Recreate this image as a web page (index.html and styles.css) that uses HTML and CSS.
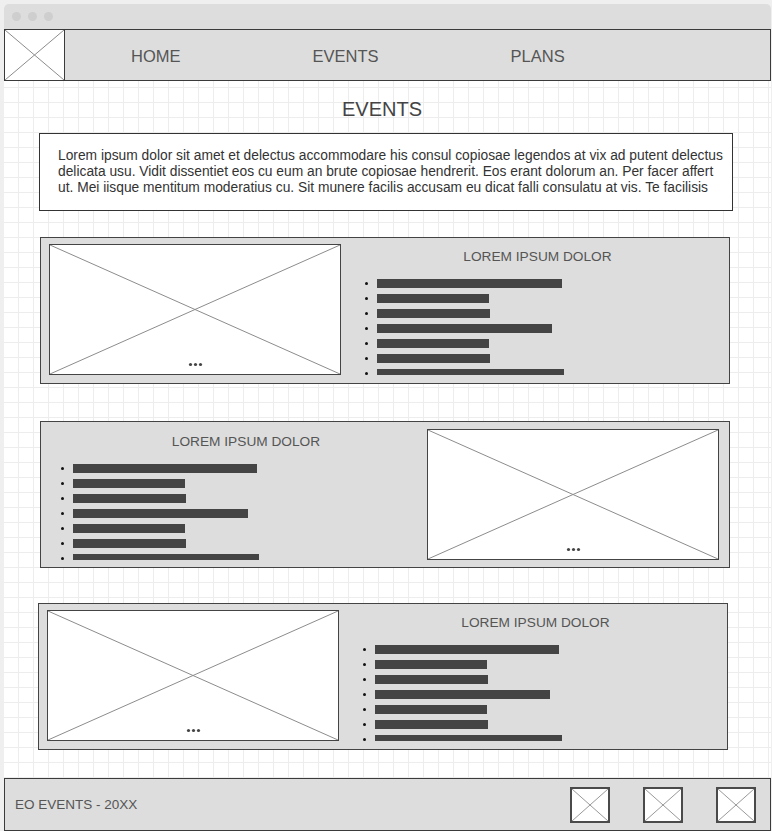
FILE: index.html
```
<!DOCTYPE html>
<html lang="en">
<head>
  <meta charset="UTF-8" />
  <meta name="viewport" content="width=device-width, initial-scale=1" />
  <title>EO Events - Events</title>
  <link rel="stylesheet" href="styles.css">
</head>
<body>
  <div class="window">
    <div class="titlebar">
      <span class="dot"></span>
      <span class="dot"></span>
      <span class="dot"></span>
    </div>

    <nav class="nav">
      <div class="logo">
        <svg viewBox="0 0 59 50" preserveAspectRatio="none">
          <line x1="0" y1="0" x2="59" y2="50" />
          <line x1="0" y1="50" x2="59" y2="0" />
        </svg>
      </div>
      <div class="nav-links">
        <a href="#">HOME</a>
        <a href="#">EVENTS</a>
        <a href="#">PLANS</a>
      </div>
    </nav>

    <main class="main">
      <h1>EVENTS</h1>
      <div class="intro">
        Lorem ipsum dolor sit amet et delectus accommodare his consul copiosae legendos at vix ad putent delectus delicata usu. Vidit dissentiet eos cu eum an brute copiosae hendrerit. Eos erant dolorum an. Per facer affert ut. Mei iisque mentitum moderatius cu. Sit munere facilis accusam eu dicat falli consulatu at vis. Te facilisis
      </div>

      <!-- event 1: picture left -->
      <section class="card card-1">
        <div class="ph">
          <svg viewBox="0 0 290 129" preserveAspectRatio="none">
            <line x1="0" y1="0" x2="290" y2="129" />
            <line x1="0" y1="129" x2="290" y2="0" />
            <circle cx="140.5" cy="119.5" r="1.6" />
            <circle cx="145.5" cy="119.5" r="1.6" />
            <circle cx="150.5" cy="119.5" r="1.6" />
          </svg>
        </div>
        <div class="info">
          <h2>LOREM IPSUM DOLOR</h2>
          <ul>
            <li><span class="bar" style="width:185px"></span></li>
            <li><span class="bar" style="width:112px"></span></li>
            <li><span class="bar" style="width:113px"></span></li>
            <li><span class="bar" style="width:175px"></span></li>
            <li><span class="bar" style="width:112px"></span></li>
            <li><span class="bar" style="width:113px"></span></li>
            <li><span class="bar" style="width:187px"></span></li>
          </ul>
        </div>
      </section>

      <!-- event 2: picture right -->
      <section class="card card-2 card-reverse">
        <div class="info">
          <h2>LOREM IPSUM DOLOR</h2>
          <ul>
            <li><span class="bar" style="width:184px"></span></li>
            <li><span class="bar" style="width:112px"></span></li>
            <li><span class="bar" style="width:113px"></span></li>
            <li><span class="bar" style="width:175px"></span></li>
            <li><span class="bar" style="width:112px"></span></li>
            <li><span class="bar" style="width:113px"></span></li>
            <li><span class="bar" style="width:186px"></span></li>
          </ul>
        </div>
        <div class="ph">
          <svg viewBox="0 0 290 129" preserveAspectRatio="none">
            <line x1="0" y1="0" x2="290" y2="129" />
            <line x1="0" y1="129" x2="290" y2="0" />
            <circle cx="140.5" cy="119.5" r="1.6" />
            <circle cx="145.5" cy="119.5" r="1.6" />
            <circle cx="150.5" cy="119.5" r="1.6" />
          </svg>
        </div>
      </section>

      <!-- event 3: picture left -->
      <section class="card card-3">
        <div class="ph">
          <svg viewBox="0 0 290 129" preserveAspectRatio="none">
            <line x1="0" y1="0" x2="290" y2="129" />
            <line x1="0" y1="129" x2="290" y2="0" />
            <circle cx="140.5" cy="119.5" r="1.6" />
            <circle cx="145.5" cy="119.5" r="1.6" />
            <circle cx="150.5" cy="119.5" r="1.6" />
          </svg>
        </div>
        <div class="info">
          <h2>LOREM IPSUM DOLOR</h2>
          <ul>
            <li><span class="bar" style="width:184px"></span></li>
            <li><span class="bar" style="width:112px"></span></li>
            <li><span class="bar" style="width:113px"></span></li>
            <li><span class="bar" style="width:175px"></span></li>
            <li><span class="bar" style="width:112px"></span></li>
            <li><span class="bar" style="width:113px"></span></li>
            <li><span class="bar" style="width:187px"></span></li>
          </ul>
        </div>
      </section>
    </main>

    <footer class="footer">
      <span class="brand">EO EVENTS - 20XX</span>
      <div class="social">
        <span class="icon"><svg viewBox="0 0 36 32" preserveAspectRatio="none"><line x1="0" y1="0" x2="36" y2="32" /><line x1="0" y1="32" x2="36" y2="0" /></svg></span>
        <span class="icon"><svg viewBox="0 0 36 32" preserveAspectRatio="none"><line x1="0" y1="0" x2="36" y2="32" /><line x1="0" y1="32" x2="36" y2="0" /></svg></span>
        <span class="icon"><svg viewBox="0 0 36 32" preserveAspectRatio="none"><line x1="0" y1="0" x2="36" y2="32" /><line x1="0" y1="32" x2="36" y2="0" /></svg></span>
      </div>
    </footer>
  </div>
</body>
</html>
```

FILE: styles.css
```
body {
  margin: 0;
  background: #efefef;
  font-family: "Liberation Sans", Arial, sans-serif;
  overflow: hidden;
}
.window {
  margin: 4px 0 0 4px;
  width: 767px;
  height: 827px;
  display: flex;
  flex-direction: column;
}
.titlebar {
  height: 25px;
  flex: none;
  box-sizing: border-box;
  padding-left: 8px;
  background: #dddddd;
  border-radius: 5px 5px 0 0;
  display: flex;
  align-items: center;
  gap: 7px;
}
.dot {
  width: 9px;
  height: 9px;
  border-radius: 50%;
  background: #cecece;
}
svg line {
  stroke: #8c8c8c;
  stroke-width: 1;
  vector-effect: non-scaling-stroke;
}
.nav {
  height: 52px;
  flex: none;
  box-sizing: border-box;
  border: 1px solid #3a3a3a;
  background: #dddddd;
  display: flex;
  align-items: center;
}
.logo {
  width: 59px;
  align-self: stretch;
  background: #fff;
  border-right: 1px solid #3a3a3a;
}
.logo svg,
.ph svg,
.icon svg {
  display: block;
  width: 100%;
  height: 100%;
}
.nav-links {
  display: flex;
  gap: 132px;
  padding: 3px 0 0 66px;
}
.nav-links a {
  color: #555;
  font-size: 16.5px;
  text-decoration: none;
}
.main {
  flex: 1;
  padding-top: 16px;
  background-color: #fff;
  background-image:
    linear-gradient(90deg, #ededed 1px, transparent 1px),
    linear-gradient(#ededed 1px, transparent 1px);
  background-size: 15px 15px;
  background-position: 14px 6px;
}
h1 {
  margin: 0;
  padding-right: 11px;
  font-size: 20px;
  line-height: 24px;
  font-weight: normal;
  text-align: center;
  color: #444;
}
.intro {
  width: 694px;
  box-sizing: border-box;
  margin: 12px 0 0 35px;
  padding: 14px 6px 14px 18px;
  border: 1px solid #333;
  background: #fff;
  font-size: 13.8px;
  line-height: 16px;
  color: #333;
}
.card {
  width: 690px;
  box-sizing: border-box;
  margin-left: 36px;
  padding: 6px 9px 8px 8px;
  display: flex;
  background: #dddddd;
  border: 1px solid #444;
}
.card-1 {
  margin-top: 26px;
}
.card-2 {
  margin-top: 37px;
  padding: 7px 10px 7px 8px;
}
.card-3 {
  margin-top: 35px;
  margin-left: 34px;
}
.ph {
  width: 292px;
  height: 131px;
  flex: none;
  box-sizing: border-box;
  border: 1px solid #444;
  background: #fff;
}
.ph circle {
  fill: #444;
}
.info {
  flex: 1;
  height: 131px;
  overflow: hidden;
}
.info h2 {
  margin: 5px 0 0;
  padding-left: 14px;
  font-size: 13.7px;
  line-height: 16px;
  font-weight: normal;
  text-align: center;
  color: #555;
}
.info ul {
  list-style: none;
  margin: 11px 0 0;
  padding: 0 0 0 24px;
}
.card-reverse .info h2 {
  padding-left: 16px;
}
.card-reverse .info ul {
  padding-left: 12px;
}
.info li {
  height: 15px;
  display: flex;
  align-items: center;
}
.info li::before {
  content: "";
  width: 3px;
  height: 3px;
  margin-right: 9px;
  border-radius: 50%;
  background: #111;
}
.bar {
  height: 9px;
  background: #444;
}
.footer {
  height: 53px;
  flex: none;
  box-sizing: border-box;
  padding: 0 14px 0 10px;
  border: 1px solid #3a3a3a;
  background: #dddddd;
  display: flex;
  align-items: center;
  justify-content: space-between;
}
.brand {
  font-size: 13.5px;
  color: #555;
}
.social {
  display: flex;
  gap: 33px;
}
.icon {
  width: 40px;
  height: 36px;
  box-sizing: border-box;
  border: 2px solid #4a4a4a;
  background: #fff;
}
.icon svg line {
  stroke: #999;
}
```
